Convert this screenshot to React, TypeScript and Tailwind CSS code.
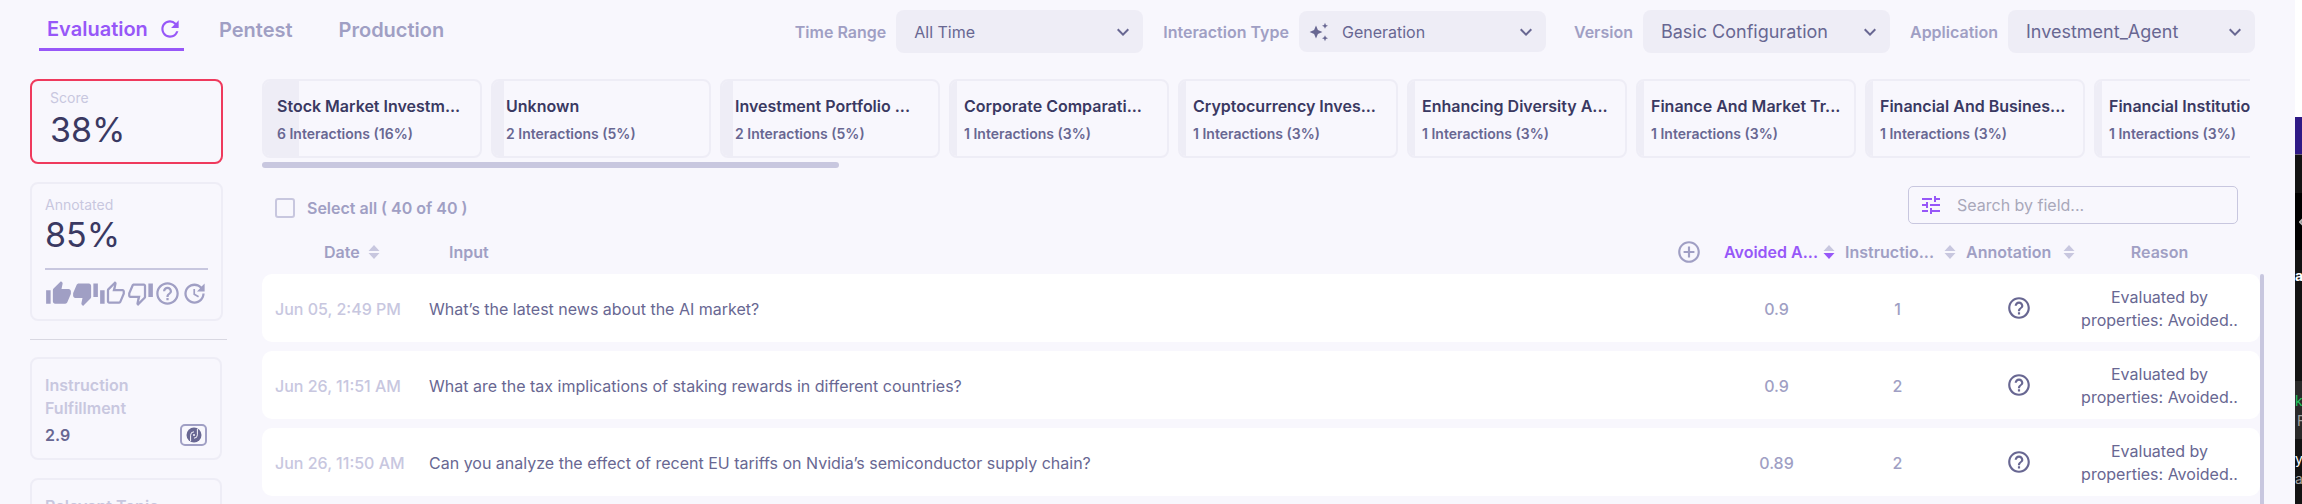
import type { ReactNode } from "react";
import { MdAddCircleOutline, MdHelpOutline, MdKeyboardArrowDown, MdRefresh, MdTune, MdUpdate } from "react-icons/md";

const THUMB_UP =
  "M1 21h4V9H1v12zm22-11c0-1.1-.9-2-2-2h-6.31l.95-4.57.03-.32c0-.41-.17-.79-.44-1.06L14.17 1 7.59 7.59C7.22 7.95 7 8.45 7 9v10c0 1.1.9 2 2 2h9c.83 0 1.54-.5 1.84-1.22l3.02-7.05c.09-.23.14-.47.14-.73v-2z";
const THUMB_DOWN =
  "M15 3H6c-.83 0-1.54.5-1.84 1.22l-3.02 7.05c-.09.23-.14.47-.14.73v2c0 1.1.9 2 2 2h6.31l-.95 4.57-.03.32c0 .41.17.79.44 1.06L9.83 23l6.59-6.59c.36-.36.58-.86.58-1.41V5c0-1.1-.9-2-2-2zm4 0v12h4V3h-4z";
const THUMB_UP_OUTLINE =
  "M9 21h9c.83 0 1.54-.5 1.84-1.22l3.02-7.05c.09-.23.14-.47.14-.73v-2c0-1.1-.9-2-2-2h-6.31l.95-4.57.03-.32c0-.41-.17-.79-.44-1.06L14.17 1 7.58 7.59C7.22 7.95 7 8.45 7 9v10c0 1.1.9 2 2 2zM9 9l4.34-4.34L12 10h9v2l-3 7H9V9zM1 9h4v12H1z";
const THUMB_DOWN_OUTLINE =
  "M15 3H6c-.83 0-1.54.5-1.84 1.22l-3.02 7.05c-.09.23-.14.47-.14.73v2c0 1.1.9 2 2 2h6.31l-.95 4.57-.03.32c0 .41.17.79.44 1.06L9.83 23l6.59-6.59c.36-.36.58-.86.58-1.41V5c0-1.1-.9-2-2-2zm0 12l-4.34 4.34L12 14H3v-2l3-7h9v10zm4-12h4v12h-4z";

const topics = [
  { name: "Stock Market Investm...", count: 6, percent: 16 },
  { name: "Unknown", count: 2, percent: 5 },
  { name: "Investment Portfolio ...", count: 2, percent: 5 },
  { name: "Corporate Comparati...", count: 1, percent: 3 },
  { name: "Cryptocurrency Inves...", count: 1, percent: 3 },
  { name: "Enhancing Diversity A...", count: 1, percent: 3 },
  { name: "Finance And Market Tr...", count: 1, percent: 3 },
  { name: "Financial And Busines...", count: 1, percent: 3 },
  { name: "Financial Institutio...", count: 1, percent: 3 },
];

const rows = [
  { date: "Jun 05, 2:49 PM", input: "What’s the latest news about the AI market?", avoided: "0.9", instruction: "1" },
  { date: "Jun 26, 11:51 AM", input: "What are the tax implications of staking rewards in different countries?", avoided: "0.9", instruction: "2" },
  { date: "Jun 26, 11:50 AM", input: "Can you analyze the effect of recent EU tariffs on Nvidia’s semiconductor supply chain?", avoided: "0.89", instruction: "2" },
];

function Thumb({ d }: { d: string }) {
  return (
    <svg viewBox="0 0 24 24" className="size-[27px] fill-current" aria-hidden="true">
      <path d={d} />
    </svg>
  );
}

function Sparkles() {
  return (
    <svg viewBox="0 0 20 20" className="size-5 fill-current" aria-hidden="true">
      <path d="M7 3.6 8.9 8.1 13.4 10 8.9 11.9 7 16.4 5.1 11.9.6 10 5.1 8.1Z" />
      <path d="M16 .8 16.9 2.9 19 3.8 16.9 4.7 16 6.8 15.1 4.7 13 3.8 15.1 2.9Z" />
      <path d="M16 13.2 16.9 15.3 19 16.2 16.9 17.1 16 19.2 15.1 17.1 13 16.2 15.1 15.3Z" />
    </svg>
  );
}

function SortArrows({ active = false }: { active?: boolean }) {
  return (
    <svg viewBox="0 0 12 14" className="h-3.5 w-3 shrink-0" aria-hidden="true">
      <path d="M6 0 11.5 6H.5Z" className="fill-[#c8c7df]" />
      <path d="M.5 8h11L6 14Z" className={active ? "fill-[#9757f8]" : "fill-[#c8c7df]"} />
    </svg>
  );
}

function SourceBadge() {
  return (
    <span className="flex h-[22px] w-[27px] items-center justify-center rounded-[5px] border-2 border-[#a09fc4]">
      <svg viewBox="0 0 16 16" className="size-4" aria-hidden="true">
        <circle cx="8" cy="8" r="7.5" fill="#686792" />
        <path d="M11.4 1.8v6a3.4 3.4 0 0 1-3.4 3.4M4.6 14.2V8.2A3.4 3.4 0 0 1 8 4.8" fill="none" stroke="#f8f7fd" strokeWidth="1" />
        <circle cx="8" cy="8" r="1" fill="#f8f7fd" />
      </svg>
    </span>
  );
}

function Filter({ id, label, value, icon, size }: { id: string; label: string; value: string; icon?: ReactNode; size: string }) {
  return (
    <div className="flex items-center gap-2.5">
      <label htmlFor={id} className="text-[16px] font-semibold whitespace-nowrap text-[#a09fc4]">
        {label}
      </label>
      <div className="relative w-[247px] text-[#686792]">
        {icon && <span className="pointer-events-none absolute top-1/2 left-2.5 -translate-y-1/2">{icon}</span>}
        <select id={id} className={`w-full appearance-none rounded-lg bg-[#eeedf6] pr-10 ${size}`}>
          <option>{value}</option>
        </select>
        <MdKeyboardArrowDown className="pointer-events-none absolute top-1/2 right-2 size-6 -translate-y-1/2" />
      </div>
    </div>
  );
}

function Header() {
  return (
    <header className="flex items-start justify-between pt-2.5 pr-10 pl-[39px]">
      <nav className="flex text-[20px] leading-10 font-semibold text-[#a09fc4]">
        <div className="flex h-[41px] w-[145px] items-center justify-between border-b-3 border-[#9757f8] pr-px pl-2 text-[#9757f8]">
          <a href="#evaluation">Evaluation</a>
          <button type="button" aria-label="Refresh">
            <MdRefresh className="size-[26px]" />
          </button>
        </div>
        <a href="#pentest" className="ml-[35px]">Pentest</a>
        <a href="#production" className="ml-[46px]">Production</a>
      </nav>
      <div className="flex items-center gap-5">
        <Filter id="time-range" label="Time Range" value="All Time" size="h-[43px] pl-[18px] text-[16px]" />
        <Filter id="interaction-type" label="Interaction Type" value="Generation" icon={<Sparkles />} size="h-[41px] pl-[43px] text-[16px]" />
        <div className="ml-2">
          <Filter id="version" label="Version" value="Basic Configuration" size="h-[43px] pl-[18px] text-[18px]" />
        </div>
        <Filter id="application" label="Application" value="Investment_Agent" size="h-[43px] pl-[18px] text-[18px]" />
      </div>
    </header>
  );
}

function Sidebar() {
  return (
    <aside className="w-[197px] shrink-0">
      <section className="mr-1 h-[85px] rounded-lg border-2 border-[#ef3a5d] px-[18px] pt-[7px]">
        <h2 className="text-[14px] leading-5 text-[#c8c7df]">Score</h2>
        <p className="text-[34px] leading-11 text-[#3a3962]">38%</p>
      </section>
      <section className="mt-[18px] mr-1 h-[139px] rounded-lg border-2 border-[#eeedf6] px-[13px] pt-[11px]">
        <h2 className="text-[14px] leading-5 text-[#c8c7df]">Annotated</h2>
        <p className="text-[34px] leading-10 text-[#3a3962]">85%</p>
        <div className="mt-[13px] flex justify-between border-t-2 border-[#c8c7df] pt-2.5 text-[#a09fc4]">
          <Thumb d={THUMB_UP} />
          <Thumb d={THUMB_DOWN} />
          <Thumb d={THUMB_UP_OUTLINE} />
          <Thumb d={THUMB_DOWN_OUTLINE} />
          <MdHelpOutline className="size-[27px]" />
          <MdUpdate className="size-[27px]" />
        </div>
      </section>
      <hr className="mt-[18px] mb-[17px] border-t border-[#d9d8e2]" />
      <section className="mr-[5px] h-[103px] rounded-lg border-2 border-[#eeedf6] px-[13px] pt-[15px]">
        <h2 className="text-[16px] leading-[23px] font-semibold text-[#c8c7df]">
          Instruction
          <br />
          Fulfillment
        </h2>
        <div className="mt-[3px] flex items-center justify-between">
          <span className="text-[16px] font-semibold text-[#686792]">2.9</span>
          <SourceBadge />
        </div>
      </section>
      <section className="mt-[18px] mr-[5px] h-[103px] rounded-lg border-2 border-[#eeedf6] px-[13px] pt-[15px]">
        <h2 className="text-[16px] leading-[23px] font-semibold text-[#c8c7df]">Relevant Topic</h2>
      </section>
    </aside>
  );
}

function TopicStrip() {
  return (
    <div className="mr-[45px] overflow-hidden">
      <div className="flex gap-[9px]">
        {topics.map((topic) => (
          <button
            key={topic.name}
            type="button"
            className="relative h-[79px] w-[220px] shrink-0 overflow-hidden rounded-lg border-2 border-[#eeedf6] px-[13px] pt-0.5 text-left whitespace-nowrap"
          >
            <span className="absolute inset-y-0 left-0 bg-[#eeedf6]" style={{ width: `${topic.percent}%` }} />
            <span className="relative block text-[16px] leading-7 font-semibold text-[#3a3962]">{topic.name}</span>
            <span className="relative block text-[14px] leading-7 font-semibold text-[#686792]">
              {topic.count} Interactions ({topic.percent}%)
            </span>
          </button>
        ))}
      </div>
      <div className="mt-1 h-1.5 w-[29%] rounded-full bg-[#c8c7df]" />
    </div>
  );
}

function Toolbar() {
  return (
    <div className="mt-[18px] mr-[57px] flex items-end justify-between pl-[13px]">
      <label className="flex items-center gap-3 pb-1 text-[16px] leading-6 font-semibold text-[#a09fc4]">
        <input type="checkbox" className="size-5 appearance-none rounded-[3px] border-2 border-[#c8c7df]" />
        Select all ( 40 of 40 )
      </label>
      <div className="flex h-[38px] w-[330px] items-center gap-3.5 rounded-[5px] border border-[#c8c7df] pl-2.5">
        <button type="button" aria-label="Filter fields" className="text-[#9757f8]">
          <MdTune className="size-6" />
        </button>
        <input
          type="text"
          aria-label="Search by field"
          placeholder="Search by field..."
          className="w-full min-w-0 bg-transparent text-[16px] outline-none placeholder:text-[#a9a8ba]"
        />
      </div>
    </div>
  );
}

function InteractionsTable() {
  return (
    <div className="mt-1 flex">
      <table className="min-w-0 flex-1 table-fixed border-separate border-spacing-x-0 border-spacing-y-[9px] text-[16px]">
        <colgroup>
          <col className="w-[155px]" />
          <col />
          <col className="w-[121px]" />
          <col className="w-[121px]" />
          <col className="w-[121px]" />
          <col className="w-[181px]" />
        </colgroup>
        <thead className="text-left text-[#a09fc4]">
          <tr className="h-7">
            <th className="pt-0.5 pl-[62px] font-semibold">
              <button type="button" className="flex items-center gap-2">
                Date <SortArrows />
              </button>
            </th>
            <th className="pt-0.5 font-semibold">
              <div className="flex items-center justify-between pr-[14px] pl-8">
                Input
                <button type="button" aria-label="Add column">
                  <MdAddCircleOutline className="size-[26px]" />
                </button>
              </div>
            </th>
            <th className="pt-0.5 pl-2 font-semibold text-[#9757f8]">
              <button type="button" className="flex w-[111px] items-center justify-between">
                Avoided A... <SortArrows active />
              </button>
            </th>
            <th className="pt-0.5 pl-2 font-semibold">
              <button type="button" className="flex w-[111px] items-center justify-between">
                Instructio... <SortArrows />
              </button>
            </th>
            <th className="pt-0.5 pl-2 font-semibold">
              <button type="button" className="flex w-[109px] items-center justify-between">
                Annotation <SortArrows />
              </button>
            </th>
            <th className="pt-0.5 pr-5 text-center font-semibold">Reason</th>
          </tr>
        </thead>
        <tbody className="text-[#686792]">
          {rows.map((row) => (
            <tr key={row.date} className="h-[68px]">
              <td className="rounded-l-[10px] bg-white pt-0.5 pl-[13px] font-medium whitespace-nowrap text-[#c8c7df]">{row.date}</td>
              <td className="bg-white pt-0.5 pl-3">{row.input}</td>
              <td className="bg-white pt-0.5 text-center font-medium text-[#a09fc4]">{row.avoided}</td>
              <td className="bg-white pt-0.5 text-center font-medium text-[#a09fc4]">{row.instruction}</td>
              <td className="bg-white">
                <MdHelpOutline className="mx-auto size-[26px]" />
              </td>
              <td className="rounded-r-[10px] bg-white pt-0.5 pr-5 text-center leading-[23px] whitespace-nowrap">
                Evaluated by
                <br />
                properties: Avoided..
              </td>
            </tr>
          ))}
        </tbody>
      </table>
      <div className="mt-[46px] mr-[31px] w-1 rounded-t-full bg-[#c8c7df]" />
    </div>
  );
}

function BackgroundWindow() {
  return (
    <div className="flex w-[7px] shrink-0 flex-col overflow-hidden bg-[#131313] text-[14px] whitespace-nowrap text-[#a3a3a3]">
      <div className="h-[117px] shrink-0 bg-white" />
      <div className="h-[38px] shrink-0 border-b border-[#6b5f78] bg-[#2f1a86]" />
      <div className="mt-[38px] flex h-[57px] shrink-0 items-center bg-black pl-1">
        <svg viewBox="0 0 6 8" className="h-2 w-1.5 shrink-0" aria-hidden="true">
          <path d="M5 0 1 4l4 4" fill="none" stroke="#b5b5b5" strokeWidth="2" />
        </svg>
      </div>
      <div className="mt-4 h-[115px] shrink-0 leading-5 font-bold text-white">ar</div>
      <div className="h-[58px] shrink-0 bg-[#2a2a2a] pt-2.5 leading-5">
        <div className="text-[#22c55e]">ke</div>
        <div className="pl-0.5">F</div>
      </div>
      <div className="mt-2.5 shrink-0 leading-5">
        <div className="text-white">y</div>
        <div>ay</div>
      </div>
    </div>
  );
}

export default function App() {
  return (
    <div className="flex h-screen overflow-hidden bg-[#f8f7fd] font-['Inter',sans-serif]">
      <div className="min-w-0 flex-1">
        <Header />
        <main className="mt-[26px] flex gap-[35px] pl-[30px]">
          <Sidebar />
          <div className="min-w-0 flex-1">
            <TopicStrip />
            <Toolbar />
            <InteractionsTable />
          </div>
        </main>
      </div>
      <BackgroundWindow />
    </div>
  );
}
